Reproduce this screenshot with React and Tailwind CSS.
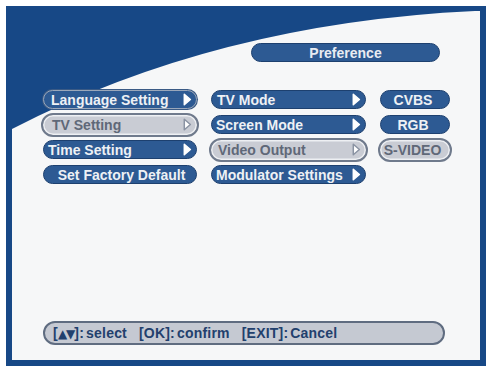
import React from 'react';

const font = { fontFamily: '"Liberation Sans", Arial, "DejaVu Sans", sans-serif' };

function Arrow({ selected }) {
  return (
    <svg width="9" height="13" viewBox="0 0 9 13" className="shrink-0">
      <path
        d="M1.3 1.3 L7.4 6.5 L1.3 11.7 Z"
        fill="#ffffff"
        stroke={selected ? '#8a93a3' : '#ffffff'}
        strokeWidth="1.5"
        strokeLinejoin="round"
      />
    </svg>
  );
}

function Btn({ label, arrow, selected, focus, center, pl = 'pl-[7px]' }) {
  if (selected) {
    return (
      <div className="flex h-[25px] items-center -mx-[2px]">
        <div
          className={`flex h-[24px] w-full items-center rounded-full border-2 border-[#6f7a8c] bg-[#c9ccd4] shadow-[inset_0_0_0_1.5px_#eef0f3] ${center ? 'justify-center' : 'justify-between'} ${pl} pr-[5px]`}
        >
          <span className="text-[14px] font-bold leading-none text-[#5f6878]">{label}</span>
          {arrow && <Arrow selected />}
        </div>
      </div>
    );
  }
  return (
    <div className="flex h-[25px] items-center">
      <div
        className={`flex h-[19px] w-full items-center rounded-full bg-[#2d5a93] ${focus ? 'border-[1.5px] border-[#9aa7ba] shadow-[0_0_0_1px_#3a5a85]' : 'border border-[#1d406f]'} ${center ? 'justify-center' : 'justify-between'} ${pl} pr-[4px]`}
      >
        <span className="text-[14px] font-bold leading-none text-[#eef1f5]">{label}</span>
        {arrow && <Arrow />}
      </div>
    </div>
  );
}

export default function App() {
  return (
    <div className="h-[367px] w-[487px] bg-white" style={font}>
      <div className="ml-[6px] mt-[6px] h-[360px] w-[480px] border-b-[6px] border-l-[6px] border-r-[6px] border-t-[5px] border-[#174886] bg-[#174886]">
        <div className="relative flex h-full w-full flex-col bg-[#f6f7f8]">
          {/* blue sweep in the top-left corner */}
          <svg className="absolute inset-0" width="468" height="349" viewBox="0 0 468 349">
            <path d="M0 0 L468 0 L463 0 Q205 12 0 118 Z" fill="#174886" />
          </svg>

          <div className="relative pl-[239px] pt-[32px]">
            <div className="flex h-[19px] w-[189px] items-center justify-center rounded-full border border-[#1d406f] bg-[#2d5a93]">
              <span className="text-[14px] font-bold leading-none text-[#e8ecf2]">Preference</span>
            </div>
          </div>

          <div className="relative mt-[25px] grid grid-cols-[154px_155px_70px] gap-x-[14px] pl-[31px]">
            <div className="flex flex-col">
              <Btn label="Language Setting" arrow focus />
              <Btn label="TV Setting" arrow selected pl="pl-[9px]" />
              <Btn label="Time Setting" arrow pl="pl-[4px]" />
              <Btn label="Set Factory Default" center />
            </div>
            <div className="flex flex-col">
              <Btn label="TV Mode" arrow pl="pl-[5px]" />
              <Btn label="Screen Mode" arrow pl="pl-[4px]" />
              <Btn label="Video Output" arrow selected pl="pl-[7px]" />
              <Btn label="Modulator Settings" arrow pl="pl-[4px]" />
            </div>
            <div className="flex flex-col">
              <Btn label="CVBS" center pl="pl-0" />
              <Btn label="RGB" center pl="pl-0" />
              <Btn label="S-VIDEO" center selected pl="pl-0" />
            </div>
          </div>

          <div className="relative mb-[15px] ml-[31px] mt-auto flex h-[24px] w-[402px] items-center rounded-full border-2 border-[#5f6c80] bg-[#c5c9d2] pl-[8px] text-[14px] font-bold leading-none tracking-[0.2px] text-[#22406d]">
            <span>
              [<span style={{ fontFamily: '"DejaVu Sans", sans-serif' }} className="text-[12px] tracking-[-1px]">▲▼</span>]:<span className="ml-[2px]">select</span>
            </span>
            <span className="ml-[12px]">[OK]:<span className="ml-[2px]">confirm</span></span>
            <span className="ml-[12px]">[EXIT]:<span className="ml-[2px]">Cancel</span></span>
          </div>
        </div>
      </div>
    </div>
  );
}
